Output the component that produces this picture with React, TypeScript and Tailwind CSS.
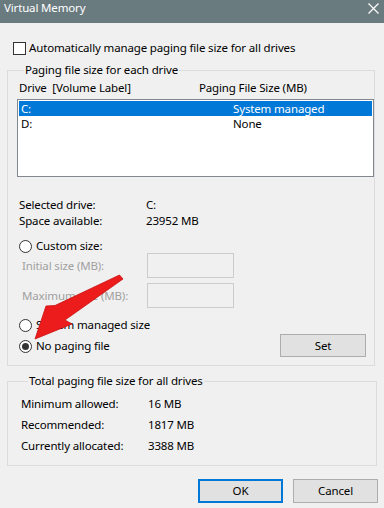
import React from "react";

const font = { fontFamily: '"Noto Sans", "Segoe UI", Arial, sans-serif' };

function Radio({ checked }: { checked?: boolean }) {
  return (
    <span className="w-[13px] h-[13px] rounded-full border border-[#333333] bg-white flex items-center justify-center shrink-0">
      {checked && <span className="w-[7px] h-[7px] rounded-full bg-[#333333]" />}
    </span>
  );
}

function WinButton({ label, primary }: { label: string; primary?: boolean }) {
  return (
    <div
      className={
        "h-[24px] w-[85px] bg-[#e1e1e1] flex items-center justify-center " +
        (primary ? "border-2 border-[#0078d7]" : "border border-[#adadad]")
      }
    >
      {label}
    </div>
  );
}

export default function App() {
  return (
    <div
      className="w-[384px] h-[508px] bg-[#f0f0f0] relative overflow-hidden text-[11.5px] tracking-[-0.15px] leading-[16px] text-black"
      style={font}
    >
      {/* title bar */}
      <div className="h-[23px] bg-[#6a7b80] flex items-start justify-between pl-[4px] pr-[5px] text-white">
        <span>Virtual Memory</span>
        <svg width="11" height="11" viewBox="0 0 11 11" className="mt-[3px]">
          <path d="M0.5 0.5 L10.5 10.5 M10.5 0.5 L0.5 10.5" stroke="white" strokeWidth="1.2" />
        </svg>
      </div>

      {/* auto manage */}
      <div className="flex items-center h-[16px] mt-[17px] pl-[13px]">
        <span className="w-[13px] h-[13px] border border-[#333333] bg-white" />
        <span className="ml-[3px]">Automatically manage paging file size for all drives</span>
      </div>

      {/* paging file per drive */}
      <fieldset className="ml-[7px] mt-[6px] w-[368px] border border-[#dcdcdc] pl-[9px] pr-[8px] pb-[8px]">
        <legend className="ml-[7px] px-[1px]">Paging file size for each drive</legend>
        <div className="grid grid-cols-[180px_1fr] pl-[2px] mt-[2px]">
          <span>Drive&nbsp; [Volume Label]</span>
          <span>Paging File Size (MB)</span>
        </div>
        <div className="mt-[3px] h-[78px] -mr-[8px] border border-[#828790] bg-white p-[1px] leading-[15px]">
          <div className="h-[15px] grid grid-cols-[212px_1fr] items-center pl-[2px] bg-[#0078d7] text-white">
            <span>C:</span>
            <span>System managed</span>
          </div>
          <div className="h-[15px] grid grid-cols-[212px_1fr] items-center pl-[2px]">
            <span>D:</span>
            <span>None</span>
          </div>
        </div>

        <div className="mt-[20px] pl-[2px] grid grid-cols-[127px_1fr]">
          <span>Selected drive:</span>
          <span>C:</span>
          <span>Space available:</span>
          <span>23952 MB</span>
        </div>

        <div className="mt-[9px] pl-[2px] flex items-center gap-[4px]">
          <Radio />
          <span>Custom size:</span>
        </div>
        <div className="-mt-[1px] h-[25px] flex items-center text-[#a0a0a0]">
          <span className="w-[130px] pl-[5px]">Initial size (MB):</span>
          <span className="w-[87px] h-[25px] border border-[#cccccc]" />
        </div>
        <div className="mt-[5px] h-[25px] flex items-center text-[#a0a0a0]">
          <span className="w-[130px] pl-[5px]">Maximum size (MB):</span>
          <span className="w-[87px] h-[25px] border border-[#cccccc]" />
        </div>

        <div className="mt-[9px] flex items-start justify-between">
          <div className="pl-[2px] flex flex-col gap-[5px]">
            <div className="flex items-center gap-[4px]">
              <Radio />
              <span>System managed size</span>
            </div>
            <div className="flex items-center gap-[4px]">
              <Radio checked />
              <span>No paging file</span>
            </div>
          </div>
          <div className="mt-[17px] h-[23px] w-[86px] bg-[#e1e1e1] border border-[#adadad] flex items-center justify-center">
            Set
          </div>
        </div>
      </fieldset>

      {/* totals */}
      <fieldset className="ml-[7px] mt-[7px] w-[370px] border border-[#dcdcdc] pl-[13px] pb-[9px]">
        <legend className="ml-[7px] px-[1px]">Total paging file size for all drives</legend>
        <div className="mt-[4px] grid grid-cols-[127px_1fr] auto-rows-[21px] items-center">
          <span>Minimum allowed:</span>
          <span>16 MB</span>
          <span>Recommended:</span>
          <span>1817 MB</span>
          <span>Currently allocated:</span>
          <span>3388 MB</span>
        </div>
      </fieldset>

      <div className="mt-[13px] pr-[6px] flex justify-end gap-[10px]">
        <WinButton label="OK" primary />
        <WinButton label="Cancel" />
      </div>

      {/* annotation arrow */}
      <svg className="absolute left-0 top-0 pointer-events-none" width="384" height="508">
        <polygon
          points="119.5,275 123,279 65,320 72,324 35,339 46,306 55,305.5"
          fill="#ec1c1c"
          stroke="#c81010"
          strokeWidth="0.8"
          strokeLinejoin="round"
        />
      </svg>
    </div>
  );
}
